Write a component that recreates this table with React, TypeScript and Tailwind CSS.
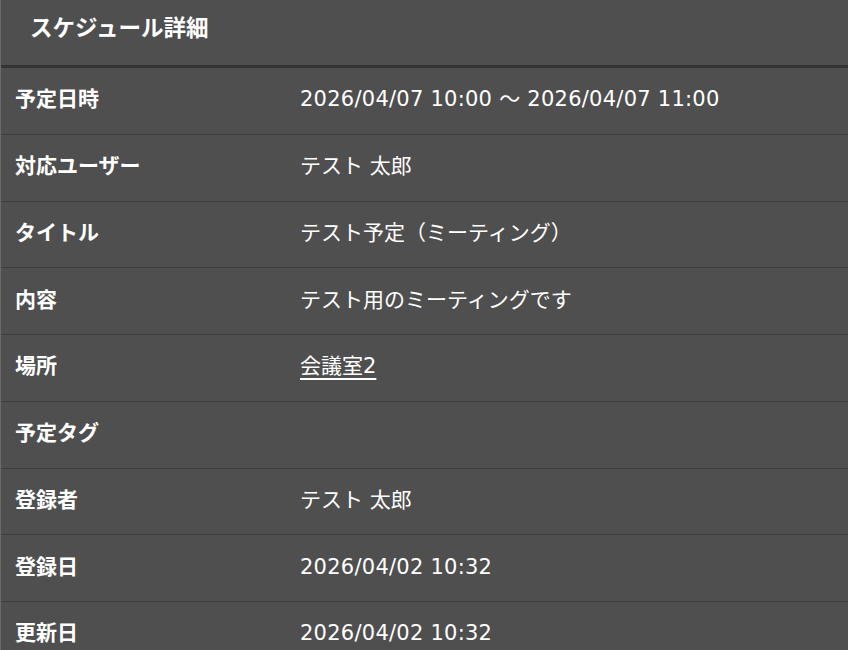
const ROWS = [
  { label: "予定日時", value: "2026/04/07 10:00 ～ 2026/04/07 11:00" },
  { label: "対応ユーザー", value: "テスト 太郎" },
  { label: "タイトル", value: "テスト予定（ミーティング）" },
  { label: "内容", value: "テスト用のミーティングです" },
  { label: "場所", value: "会議室2", link: true },
  { label: "予定タグ", value: "" },
  { label: "登録者", value: "テスト 太郎" },
  { label: "登録日", value: "2026/04/02 10:32" },
  { label: "更新日", value: "2026/04/02 10:32" },
];

export default function App() {
  return (
    <div
      className="h-[650px] w-[848px] overflow-hidden border-l border-[#6a6a6a] bg-[#4f4f4f] text-white"
      style={{ fontFamily: '"DejaVu Sans", "Noto Sans CJK JP", sans-serif' }}
    >
      <div className="flex h-[68px] items-center border-b-[3px] border-[#343434] pb-[12px] pl-[29px]">
        <h1
          className="text-[22.5px] font-bold leading-none"
          style={{ fontFamily: '"Noto Sans CJK JP", sans-serif' }}
        >
          スケジュール詳細
        </h1>
      </div>
      {ROWS.map((row) => (
        <div
          key={row.label}
          className="flex h-[66.75px] items-center border-b border-[#3f3f3f] pb-[2px]"
        >
          <div className="w-[299px] shrink-0 pl-[14px] text-[21px] font-bold leading-none">
            {row.label}
          </div>
          <div
            className={
              /^\d/.test(row.value)
                ? "text-[21px] leading-none tracking-[0.25px]"
                : "text-[21px] leading-none"
            }
          >
            {row.link ? <a className="underline underline-offset-[5px]">{row.value}</a> : row.value}
          </div>
        </div>
      ))}
    </div>
  );
}
